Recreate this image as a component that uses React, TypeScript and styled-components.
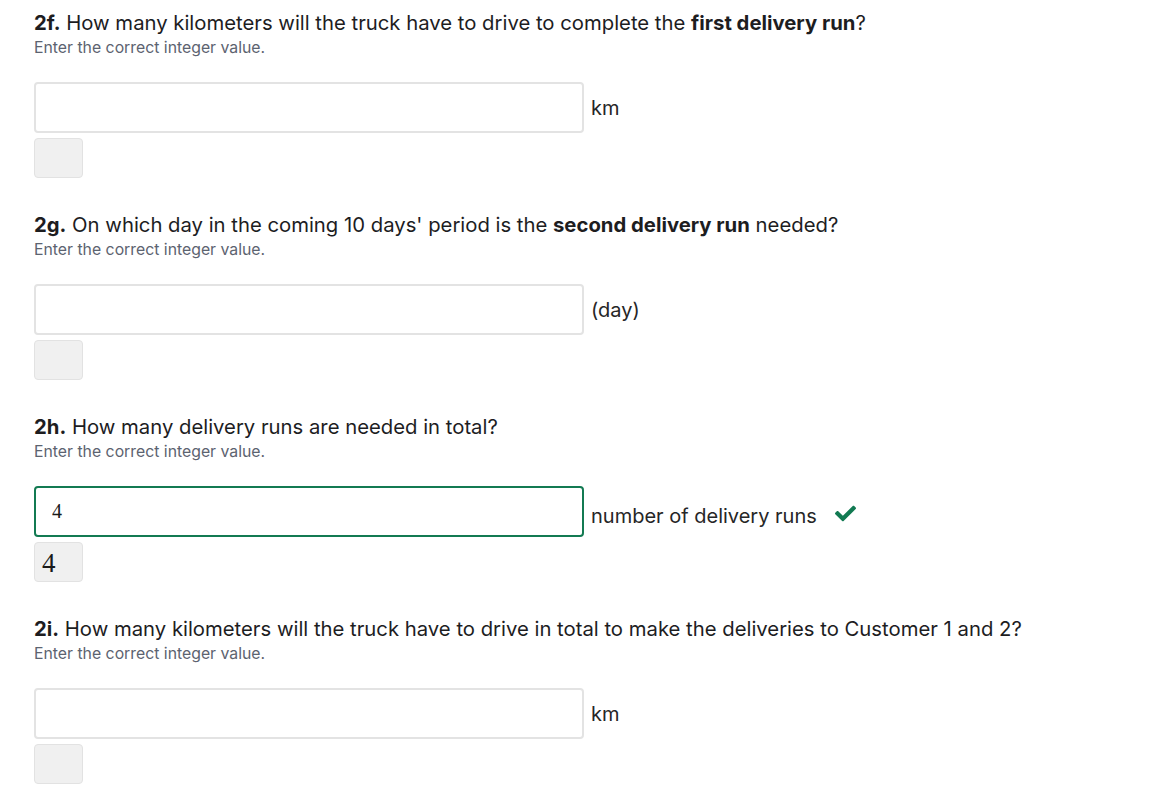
import React from 'react';
import styled, { createGlobalStyle } from 'styled-components';
import { FaCheck } from 'react-icons/fa';

interface Question {
  id: string;
  parts: { text: string; bold?: boolean }[];
  unit: string;
  value?: string;
  correct?: boolean;
}

const questions: Question[] = [
  {
    id: '2f.',
    parts: [
      { text: 'How many kilometers will the truck have to drive to complete the ' },
      { text: 'first delivery run', bold: true },
      { text: '?' },
    ],
    unit: 'km',
  },
  {
    id: '2g.',
    parts: [
      { text: "On which day in the coming 10 days' period is the " },
      { text: 'second delivery run', bold: true },
      { text: ' needed?' },
    ],
    unit: '(day)',
  },
  {
    id: '2h.',
    parts: [{ text: 'How many delivery runs are needed in total?' }],
    unit: 'number of delivery runs',
    value: '4',
    correct: true,
  },
  {
    id: '2i.',
    parts: [
      { text: 'How many kilometers will the truck have to drive in total to make the deliveries to Customer 1 and 2?' },
    ],
    unit: 'km',
  },
];

export default function App() {
  return (
    <Page>
      <GlobalStyle />
      {questions.map((q) => (
        <Section key={q.id}>
          <Title>
            <strong>{q.id}</strong>{' '}
            {q.parts.map((p, i) => (p.bold ? <strong key={i}>{p.text}</strong> : <span key={i}>{p.text}</span>))}
          </Title>
          <Hint>Enter the correct integer value.</Hint>
          <AnswerRow>
            <AnswerInput $correct={q.correct} defaultValue={q.value ?? ''} readOnly />
            <Unit $graded={q.correct}>{q.unit}</Unit>
            {q.correct && (
              <CheckWrap>
                <FaCheck size={21} />
              </CheckWrap>
            )}
          </AnswerRow>
          <Preview>{q.value}</Preview>
        </Section>
      ))}
    </Page>
  );
}

const GlobalStyle = createGlobalStyle`
  body {
    margin: 0;
    background: #ffffff;
    font-family: Inter, "Noto Sans", sans-serif;
  }
`;

const Page = styled.div`
  display: flex;
  flex-direction: column;
  gap: 35px;
  padding: 11px 0 0 34px;
`;

const Section = styled.div`
  display: flex;
  flex-direction: column;
`;

const Title = styled.div`
  font-size: 20.3px;
  line-height: 24px;
  color: #1d1d1f;
  strong {
    font-weight: 700;
  }
`;

const Hint = styled.div`
  margin-top: 3px;
  font-size: 15.8px;
  line-height: 20px;
  color: #5c6370;
`;

const AnswerRow = styled.div`
  display: flex;
  align-items: center;
  margin-top: 24px;
`;

const AnswerInput = styled.input<{ $correct?: boolean }>`
  box-sizing: border-box;
  width: 550px;
  height: 51px;
  padding: 0 16px;
  border: 2px solid ${(p) => (p.$correct ? '#137a52' : '#e3e3e3')};
  border-radius: 4px;
  font-family: "Liberation Serif", serif;
  font-size: 20px;
  color: #1a1a1a;
  outline: none;
  background: #fff;
`;

const Unit = styled.span<{ $graded?: boolean }>`
  margin-left: 7px;
  padding-top: ${(p) => (p.$graded ? '9px' : '0')};
  font-size: 20px;
  color: #262626;
`;

const CheckWrap = styled.span`
  display: inline-flex;
  margin-left: 18px;
  padding-top: 4px;
  color: #127a52;
`;

const Preview = styled.div`
  box-sizing: border-box;
  margin-top: 5px;
  width: 49px;
  height: 40px;
  padding: 6px 0 0 7px;
  background: #f0f0f0;
  border: 1px solid #e2e2e2;
  border-radius: 4px;
  font-family: "Liberation Serif", serif;
  font-size: 27px;
  line-height: 28px;
  color: #1a1a1a;
`;
